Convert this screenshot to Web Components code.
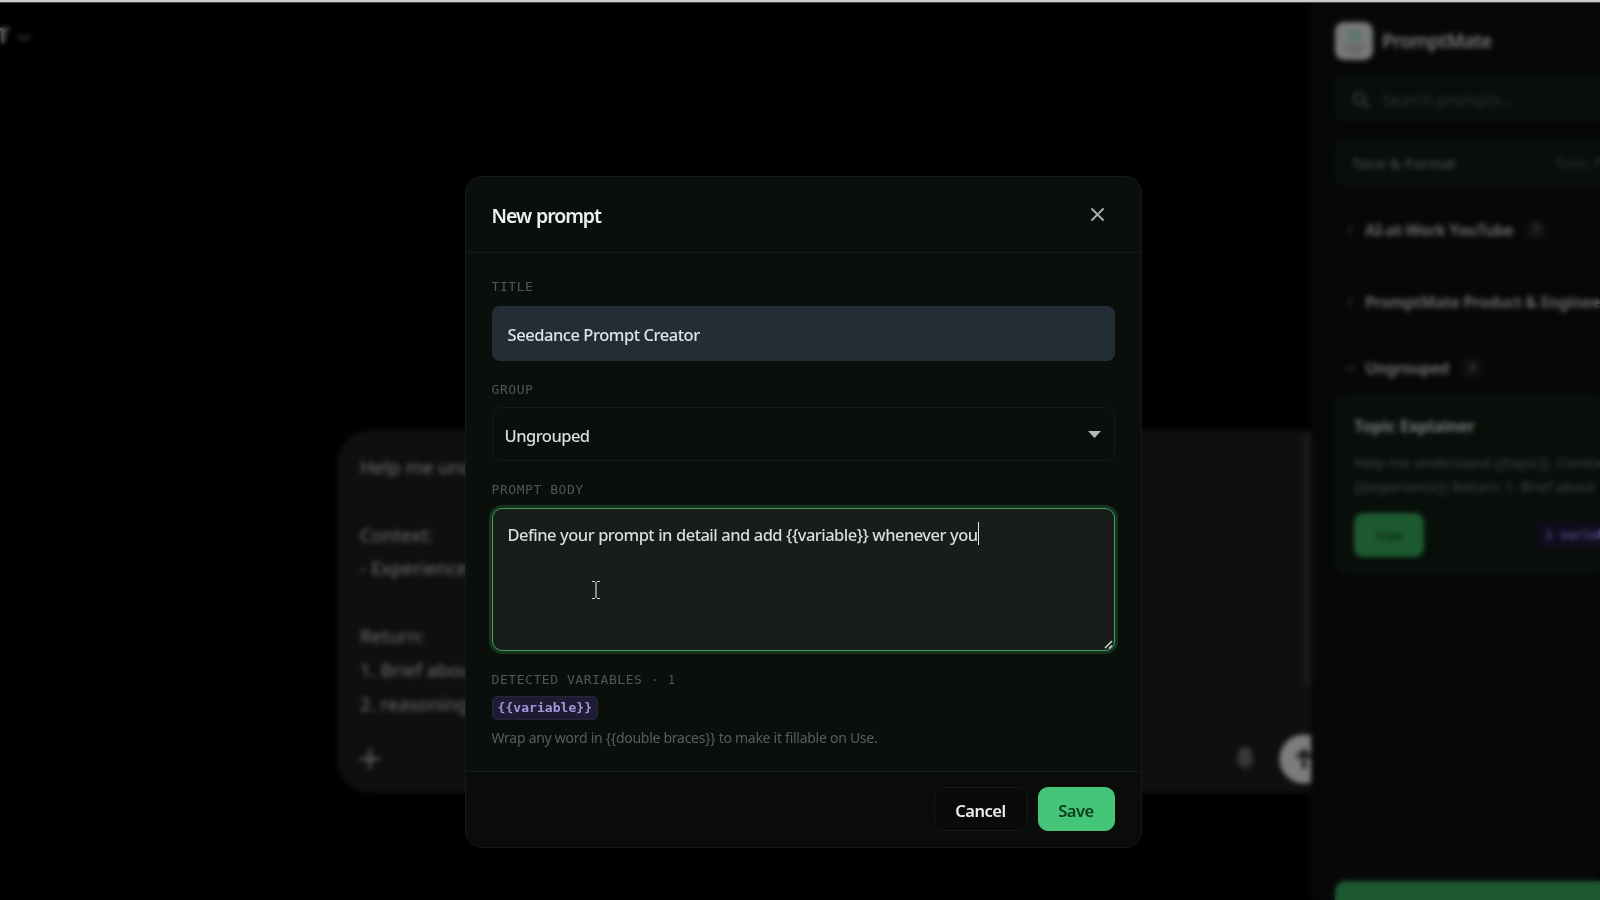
<!DOCTYPE html>
<html lang="en">
<head>
<meta charset="utf-8">
<title>PromptMate</title>
<style>
  html, body { margin: 0; height: 100%; overflow: hidden; background: #000; }
  body { font-family: "Noto Sans", "Open Sans", sans-serif; color: #e6e9e7; }
</style>
</head>
<body>
<prompt-app></prompt-app>

<script>
const define = (name, css, html) => {
  customElements.define(name, class extends HTMLElement {
    constructor () {
      super()
      this.attachShadow({ mode: 'open' }).innerHTML = `<style>*{box-sizing:border-box}${css}</style>${html}`
    }
  })
}

/* ---------- page behind the dialog ---------- */

define('chat-header', `
  :host { display: flex; align-items: center; height: 70px; font-size: 21px; font-weight: 700; color: #707070; }
  span { margin-left: -3px; width: 14px; }
  svg { margin-left: 6px; margin-top: 5px; }
`, `
  <span>T</span>
  <svg width="14" height="9" viewBox="0 0 14 9" fill="none" stroke="#444" stroke-width="2"><path d="M1 2l6 5 6-5"/></svg>
`)

define('chat-composer', `
  :host {
    display: flex; flex-direction: column; height: 363px; width: 1010px;
    background: #0f0f0f; border-radius: 34px; color: #6c6c6c; font-size: 18.5px;
  }
  .text { position: relative; height: 297px; padding: 20px 23px 0; overflow: hidden; line-height: 33.8px; white-space: pre; letter-spacing: .08px; }
  .bar { display: flex; align-items: center; height: 64px; padding: 0 14px 0 23px; }
  .mic { margin-left: 855px; }
  .send { margin-left: 24px; margin-top: -1px; }
  .scroll { position: absolute; left: 966px; top: 4px; width: 12px; height: 252px; background: #1a1a1a; }
`, `
  <div class="text">Help me understand {{topic}}.

Context:
- Experience: {{experience}}

Return:
1. Brief about the topic
2. reasoning<div class="scroll"></div></div>
  <div class="bar">
    <svg width="20" height="20" viewBox="0 0 20 20" stroke="#666" stroke-width="2.4"><path d="M10 0v20M0 10h20"/></svg>
    <svg class="mic" width="20" height="26" viewBox="0 0 20 26" fill="none" stroke="#444" stroke-width="2"><rect x="5" y="2" width="10" height="15" rx="5" fill="#383838"/><path d="M2 12a8 8 0 0 0 16 0M10 20v4"/></svg>
    <svg class="send" width="50" height="50" viewBox="0 0 50 50"><circle cx="25" cy="25" r="24.5" fill="#7c7c7c"/><path d="M25 35V17M18 24l7-7 7 7" fill="none" stroke="#1a1a1a" stroke-width="4"/></svg>
  </div>
`)

define('chat-pane', `
  :host { display: flex; flex-direction: column; width: 1311px; flex: none; overflow: hidden; }
  chat-composer { margin: 360px 0 0 337px; flex: none; }
`, `<chat-header></chat-header><chat-composer></chat-composer>`)

define('prompt-group', `
  :host { display: flex; align-items: center; flex: none; height: 30px; padding-left: 11px; white-space: nowrap; font-size: 15.5px; font-weight: 700; color: #626462; letter-spacing: -.3px; }
  svg { flex: none; margin-right: 11px; }
  :host([open]) svg { transform: rotate(90deg); }
  .count { margin-left: 12px; min-width: 22px; height: 20px; padding: 0 7px; border-radius: 10px; background: #0f1310; color: #3a403c; font-size: 12px; line-height: 20px; letter-spacing: 0; text-align: center; }
`, `
  <svg width="8" height="10" viewBox="0 0 8 10" fill="none" stroke="#333" stroke-width="1.5"><path d="M2 1l4 4-4 4"/></svg>
  <slot></slot><span class="count"><slot name="count"></slot></span>
`)

define('prompt-card', `
  :host { display: block; height: 180px; padding: 18px 0 0 18px; width: 330px; background: #080e0a; border: 1px solid #0d120e; border-radius: 12px; }
  .name { height: 26px; line-height: 26px; font-size: 16.5px; font-weight: 700; color: #707270; letter-spacing: -.2px; }
  .body { margin-top: 12px; line-height: 24px; font-size: 14.2px; color: #3e413f; white-space: pre; }
  .row { display: flex; align-items: center; margin-top: 14px; gap: 112px; }
  .use { width: 70px; height: 44px; border-radius: 9px; background: #1d5a30; color: #0a2c14; font-size: 15px; font-weight: 600; line-height: 44px; text-align: center; }
  .vars { margin-top: -1px; height: 27px; padding: 0 9px; border-radius: 6px; background: #100c1c; color: #4e4379; font: 700 13px/27px "DejaVu Sans Mono", monospace; letter-spacing: -.4px; white-space: nowrap; }
`, `
  <div class="name"><slot name="name"></slot></div>
  <div class="body"><slot></slot></div>
  <div class="row"><div class="use">Use</div><div class="vars"><slot name="vars"></slot></div></div>
`)

define('prompt-panel', `
  :host { display: flex; flex-direction: column; flex: none; width: 340px; height: 900px; padding-left: 24px; background: #060706; }
  .brand { display: flex; align-items: center; flex: none; gap: 9px; height: 38px; margin-top: 22px; font-size: 18.8px; font-weight: 600; color: #747674; letter-spacing: -.6px; }
  .box { display: flex; align-items: center; flex: none; width: 330px; height: 47px; padding-left: 16px; background: #080e0a; border: 1px solid #0b110d; border-radius: 9px; white-space: nowrap; }
  .search { margin-top: 15px; padding-top: 2px; gap: 12px; color: #2b302d; font-size: 16px; }
  .filter { margin-top: 18px; padding-bottom: 2px; color: #4d514e; font-size: 15px; }
  .filter .mode { margin-left: 99px; font-size: 14px; color: #2c302d; }
  .g1 { margin-top: 28px; } .g2 { margin-top: 42px; } .g3 { margin-top: 36px; }
  prompt-card { margin-top: 11px; flex: none; box-sizing: border-box; }
  .add { margin-top: 307px; flex: none; height: 60px; width: 330px; border-radius: 10px; background: #1d5a30; }
`, `
  <div class="brand">
    <svg width="38" height="38" viewBox="0 0 38 38"><rect width="38" height="38" rx="9" fill="#777978"/><circle cx="20" cy="14" r="7" fill="#5f7470"/><path d="M9 25h20M12 30h14" stroke="#565958" stroke-width="2.2"/></svg>
    <span>PromptMate</span>
  </div>
  <div class="box search">
    <svg width="18" height="18" viewBox="0 0 18 18" fill="none" stroke="#3c403d" stroke-width="2.2"><circle cx="7.5" cy="7.5" r="5.5"/><path d="M11.5 11.5L17 17"/></svg>
    <span>Search prompts...</span>
  </div>
  <div class="box filter"><span>Tone &amp; Format</span><span class="mode">Tone, Format</span></div>
  <prompt-group class="g1">AI-at-Work YouTube<span slot="count">7</span></prompt-group>
  <prompt-group class="g2">PromptMate Product &amp; Engineering<span slot="count">5</span></prompt-group>
  <prompt-group class="g3" open>Ungrouped<span slot="count">1</span></prompt-group>
  <prompt-card><span slot="name">Topic Explainer</span>Help me understand {{topic}}. Context:<br>{{experience}} Return: 1. Brief about<span slot="vars">1 variable</span></prompt-card>
  <div class="add"></div>
`)

/* ---------- dialog ---------- */

define('form-field', `
  :host { display: block; }
  .label { height: 20px; margin-bottom: var(--label-gap, 8px); font: 13px/20px "DejaVu Sans Mono", monospace; letter-spacing: .56px; color: #525654; white-space: pre; }
`, `<div class="label"><slot name="label"></slot></div><slot></slot>`)

define('text-input', `
  :host { display: flex; align-items: center; height: 55px; padding: 2px 16px 0; border-radius: 8px; background: #222d36; font-size: 16.5px; font-weight: 500; letter-spacing: -.45px; color: #e0e4e8; }
`, `<slot></slot>`)

define('select-box', `
  :host { display: flex; align-items: center; justify-content: space-between; height: 54px; padding: 3px 13px 0; border: 1px solid #171b18; border-radius: 10px; font-size: 16.5px; font-weight: 500; letter-spacing: -.52px; color: #dadddb; }
  slot { display: block; margin-left: -1px; }
  svg { margin-top: -2px; }
`, `<slot></slot><svg width="13" height="7" viewBox="0 0 13 7"><path d="M0 0h13L6.5 7z" fill="#b4b7b5"/></svg>`)

define('text-area', `
  :host { display: block; position: relative; height: 143px; padding: 13px 15px; border: 1.5px solid #479c62; border-radius: 10px; background: #181d19; box-shadow: 0 0 0 3px #14331e; font-size: 16.5px; font-weight: 500; line-height: 25px; letter-spacing: -.52px; word-spacing: .25px; color: #dadddb; }
  .line { display: flex; align-items: center; }
  .caret { width: 1px; height: 23px; margin-top: -2px; background: #e8ebe9; }
  .grip { position: absolute; right: 1px; bottom: 1px; }
  .pointer { position: absolute; left: 99px; top: 72px; }
`, `
  <div class="line"><slot></slot><span class="caret"></span></div>
  <svg class="grip" width="9" height="9" viewBox="0 0 9 9" stroke="#c9ccca" stroke-width="1.7"><path d="M1 8L8 1M5 8.5L8 5.5"/></svg>
  <svg class="pointer" width="8" height="18" viewBox="0 0 8 18" fill="none" stroke="#d4d7d5" stroke-width="1.2"><path d="M0 .5h3M5 .5h3M4 1v16M0 17.5h3M5 17.5h3"/></svg>
`)

define('variable-chip', `
  :host { display: block; width: max-content; height: 24px; padding: 0 5px; border: 1px solid #272438; border-radius: 5px; background: #1e1b33; font: 700 13px/21px "DejaVu Sans Mono", monospace; letter-spacing: .05px; color: #a696dc; }
`, `<slot></slot>`)

define('dialog-button', `
  :host { display: flex; align-items: center; justify-content: center; width: 94px; height: 44px; padding: 3px 1px 0 0; box-sizing: border-box; border: 1px solid #161917; border-radius: 10px; background: #080b09; font-size: 16.5px; font-weight: 600; letter-spacing: -.5px; color: #eceeed; }
  :host([primary]) { width: 77px; border-color: #45c577; background: #45c577; color: #0b3a1c; }
`, `<slot></slot>`)

define('modal-dialog', `
  :host { display: flex; flex-direction: column; width: 677px; height: 672px; box-sizing: border-box; border: 1px solid #171b18; border-radius: 17px; background: #0b0f0c; overflow: hidden; }
  header { display: flex; align-items: center; justify-content: space-between; height: 76px; flex: none; padding: 0 37px 0 25.5px; border-bottom: 1px solid #171b18; }
  h1 { margin: 2px 0 0; font-size: 19.5px; font-weight: 650; letter-spacing: -1.05px; word-spacing: 1px; color: #eef0ef; }
  main { flex: 1; padding: 24px 26px 0 25.5px; }
  footer { display: flex; gap: 10px; justify-content: flex-end; height: 76px; flex: none; padding: 15px 26px 0; border-top: 1px solid #171b18; background: #0a0c0a; }
`, `
  <header><h1><slot name="title"></slot></h1>
    <svg width="13" height="13" viewBox="0 0 13 13" stroke="#a9acaa" stroke-width="1.9" stroke-linecap="round"><path d="M1 1l11 11M12 1L1 12"/></svg>
  </header>
  <main><slot></slot></main>
  <footer><slot name="actions"></slot></footer>
`)

define('modal-overlay', `
  :host { display: block; position: absolute; inset: 3px 0 0; padding: 173px 0 0 465px; box-sizing: border-box; backdrop-filter: blur(2.8px); }
  text-input, select-box, text-area, variable-chip { box-sizing: border-box; }
  form-field + form-field { margin-top: 19px; }
  .title { --label-gap: 9px; }
  .group { --label-gap: 7px; }
  .vars { --label-gap: 6px; }
  .hint { margin-top: 7px; font-size: 14px; line-height: 22px; color: #5a5e5b; letter-spacing: -.27px; white-space: nowrap; }
`, `
  <modal-dialog>
    <span slot="title">New prompt</span>
    <form-field class="title"><span slot="label">TITLE</span><text-input><span>Seedance Prompt Creator</span></text-input></form-field>
    <form-field class="group"><span slot="label">GROUP</span><select-box><span>Ungrouped</span></select-box></form-field>
    <form-field><span slot="label">PROMPT BODY</span><text-area><span>Define your prompt in detail and add {{variable}} whenever you</span></text-area></form-field>
    <form-field class="vars"><span slot="label">DETECTED VARIABLES · 1</span><variable-chip><span>{{variable}}</span></variable-chip></form-field>
    <div class="hint"><span>Wrap any word in {{double braces}} to make it fillable on Use.</span></div>
    <dialog-button slot="actions"><span>Cancel</span></dialog-button>
    <dialog-button slot="actions" primary><span>Save</span></dialog-button>
  </modal-dialog>
`)

define('prompt-app', `
  :host { display: block; position: relative; width: 1600px; height: 900px; overflow: hidden; background: #000; }
  .page { display: flex; height: 900px; }
  .edge { position: absolute; inset: 0 0 auto; height: 3px; background: linear-gradient(#c9cdcb 0 2px, #4a4c4b 2px 3px); }
`, `
  <div class="page"><chat-pane></chat-pane><prompt-panel></prompt-panel></div>
  <modal-overlay></modal-overlay>
  <div class="edge"></div>
`)
</script>
</body>
</html>
